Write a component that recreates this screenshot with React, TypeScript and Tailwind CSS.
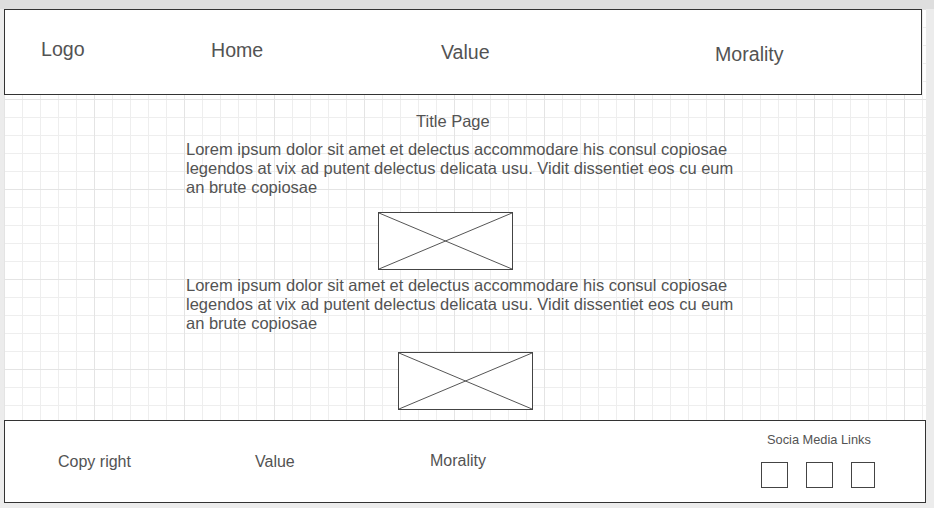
import React from "react";

function Placeholder({ className }: { className: string }) {
  return (
    <div className={`border border-[#444] bg-white ${className}`}>
      <svg width="100%" height="100%" preserveAspectRatio="none" viewBox="0 0 100 100" className="block">
        <line x1="0" y1="0" x2="100" y2="100" stroke="#555" strokeWidth="1" vectorEffect="non-scaling-stroke" />
        <line x1="100" y1="0" x2="0" y2="100" stroke="#555" strokeWidth="1" vectorEffect="non-scaling-stroke" />
      </svg>
    </div>
  );
}

const lorem =
  "Lorem ipsum dolor sit amet et delectus accommodare his consul copiosae legendos at vix ad putent delectus delicata usu. Vidit dissentiet eos cu eum an brute copiosae";

export default function App() {
  return (
    <div className="w-[934px] h-[508px] overflow-hidden bg-[#ececec] flex flex-col font-['Liberation_Sans',Arial,sans-serif] text-[#535353]">
      <div className="h-[9px] shrink-0 bg-[#dedede]" />
      <div className="ml-[4px] w-[922px] h-[494px] flex flex-col bg-white bg-[linear-gradient(to_right,#e4e4e4_1px,transparent_1px),linear-gradient(to_bottom,#e4e4e4_1px,transparent_1px),linear-gradient(to_right,#eeeeee_1px,transparent_1px),linear-gradient(to_bottom,#eeeeee_1px,transparent_1px)] bg-[size:90px_90px,90px_90px,18px_18px,18px_18px] bg-[position:0px_0px]">
        {/* Header */}
        <header className="w-[918px] h-[86px] shrink-0 border border-[#333] bg-white grid grid-cols-[170px_230px_274px_1fr] pl-[36px] text-[19.6px] leading-[22px]">
          <span className="mt-[28px]">Logo</span>
          <span className="mt-[29px]">Home</span>
          <span className="mt-[31px]">Value</span>
          <span className="mt-[33px]">Morality</span>
        </header>

        {/* Main */}
        <main className="flex-1 flex flex-col items-start text-[16.5px] leading-[19px]">
          <div className="mt-[17px] ml-[412px]">Title Page</div>
          <p className="mt-[9px] ml-[182px] w-[562px]">{lorem}</p>
          <Placeholder className="mt-[15px] ml-[374px] w-[135px] h-[58px]" />
          <p className="mt-[6px] ml-[182px] w-[562px]">{lorem}</p>
          <Placeholder className="mt-[19px] ml-[394px] w-[135px] h-[58px]" />
        </main>

        {/* Footer */}
        <footer className="w-[922px] h-[83px] shrink-0 border border-[#333] bg-white flex text-[16px] leading-[18px]">
          <span className="ml-[53px] mt-[32px] w-[197px]">Copy right</span>
          <span className="mt-[32px] w-[175px]">Value</span>
          <span className="mt-[31px] w-[331px]">Morality</span>
          <div className="flex flex-col">
            <span className="mt-[11px] ml-[6px] text-[12.8px] leading-[15px]">Socia Media Links</span>
            <div className="mt-[15px] flex gap-[18px]">
              <div className="w-[27px] h-[26px] border border-[#444]" />
              <div className="w-[27px] h-[26px] border border-[#444]" />
              <div className="w-[24px] h-[26px] border border-[#444]" />
            </div>
          </div>
        </footer>
      </div>
    </div>
  );
}
